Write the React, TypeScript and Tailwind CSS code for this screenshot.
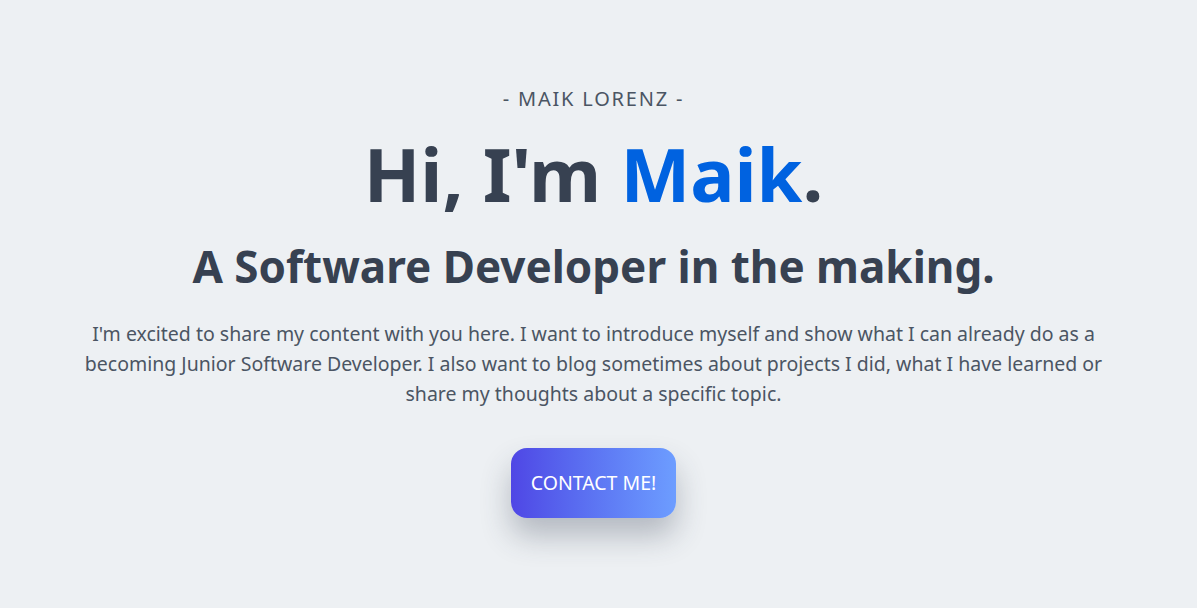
export default function App() {
  return (
    <main
      className="min-h-[608px] w-full bg-[#edf0f3] pr-[10px] text-center"
      style={{ fontFamily: '"Noto Sans", "Open Sans", sans-serif' }}
    >
      <section className="mx-auto flex flex-col items-center px-[60px] pt-[85px]">
        <p className="text-xl leading-7 tracking-[0.09em] text-[#4b5563]">- MAIK LORENZ -</p>
        <h1 className="mt-[17px] text-[74px] font-bold leading-[1.2] text-[#374151]">
          Hi, I'm <span className="text-[#0062e0]">Maik</span>.
        </h1>
        <h2 className="mt-[21px] text-[44px] font-bold leading-[1.2] text-[#374151]">
          A Software Developer in the making.
        </h2>
        <p className="mt-[26px] max-w-[1060px] text-[19.5px] leading-[30px] text-[#4b5563]">
          I'm excited to share my content with you here. I want to introduce myself and show what I can
          already do as a becoming Junior Software Developer. I also want to blog sometimes about projects I
          did, what I have learned or share my thoughts about a specific topic.
        </p>
        <button className="mt-[39px] flex h-[70px] w-[165px] items-center justify-center rounded-2xl bg-gradient-to-r from-[#4f46e5] to-[#6d9dff] text-[19.5px] text-white shadow-[0_18px_30px_rgba(50,60,80,0.3)]">
          CONTACT ME!
        </button>
      </section>
    </main>
  );
}
